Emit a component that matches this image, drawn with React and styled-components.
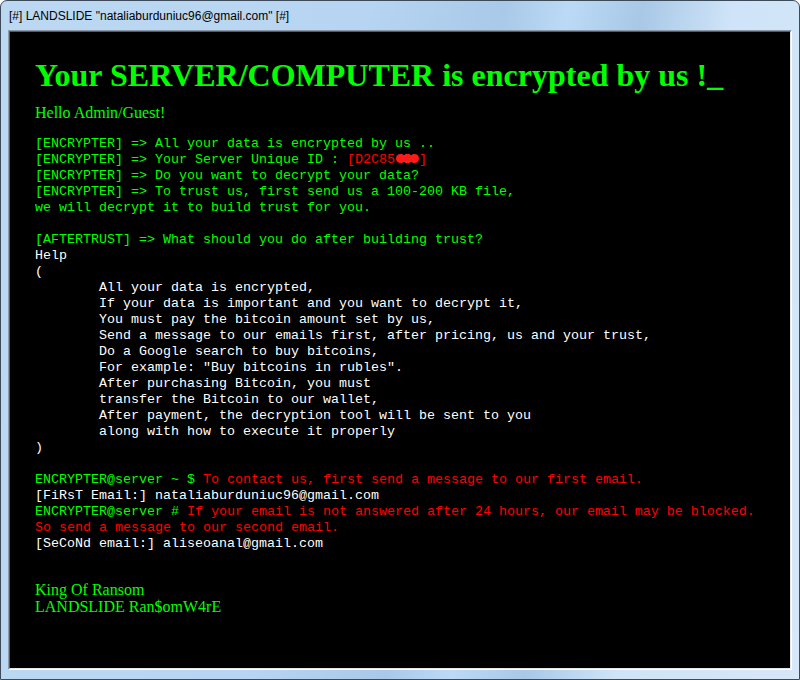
import React from "react";
import styled, { createGlobalStyle } from "styled-components";

const GlobalStyle = createGlobalStyle`
  html, body {
    margin: 0;
    padding: 0;
    background: #ffffff;
  }
`;

const Window = styled.div`
  box-sizing: border-box;
  width: 800px;
  height: 680px;
  border: 1px solid #3c4a5a;
  border-radius: 7px 7px 0 0;
  background: linear-gradient(
    100deg,
    #bcd8f1 0%,
    #b7d5f2 40%,
    #a9c9e8 55%,
    #bcdaf5 62%,
    #a8c8e6 70%,
    #cfe4f8 80%,
    #d6e7f8 100%
  );
  display: flex;
  flex-direction: column;
  padding: 0 7px 9px 7px;
`;

const TitleBar = styled.div`
  height: 29px;
  display: flex;
  align-items: center;
  padding-left: 1px;
  font-family: "Liberation Sans", "Noto Sans", sans-serif;
  font-size: 12px;
  color: #000;
`;

const ClientEdge = styled.div`
  flex: 1;
  display: flex;
  border-top: 1px solid #8c9aab;
  border-left: 1px solid #8c9aab;
  border-right: 1px solid #ffffff;
  border-bottom: 1px solid #ffffff;
`;

const Screen = styled.div`
  flex: 1;
  background: #000;
  border-top: 1px solid #5a5a5a;
  border-left: 1px solid #5a5a5a;
  border-right: 1px solid #e6e6e6;
  border-bottom: 1px solid #e6e6e6;
  padding: 24px 25px 0 25px;
  color: #00ff00;
  overflow: hidden;
`;

const Headline = styled.h1`
  margin: 0;
  font-family: "Liberation Serif", "Times New Roman", serif;
  font-weight: bold;
  font-size: 32px;
  line-height: 38px;
  color: #00ff00;
`;

const Greeting = styled.p`
  margin: 10px 0 14px;
  font-family: "Liberation Serif", "Times New Roman", serif;
  font-size: 16px;
  line-height: 18px;
`;

const Console = styled.pre`
  margin: 0;
  font-family: "Liberation Mono", "Courier New", monospace;
  font-size: 13.33px;
  line-height: 16px;
  tab-size: 8;
  color: #00ff00;
`;

const Tone = styled.span`
  color: ${({ $c }) => $c};
`;

const Redacted = styled.span`
  display: inline-block;
  width: 23px;
  height: 9px;
  margin-left: 1px;
  border-radius: 5px;
  background: radial-gradient(circle at 4px 4.5px, #ff1a1a 4.5px, transparent 5px),
    radial-gradient(circle at 11.5px 4.5px, #ff1a1a 4.5px, transparent 5px),
    radial-gradient(circle at 19px 4.5px, #ff1a1a 4.5px, transparent 5px),
    linear-gradient(#ff1a1a, #ff1a1a) 4px 1px / 15px 7px no-repeat;
`;

const Signature = styled.p`
  margin: 29px 0 0;
  font-family: "Liberation Serif", "Times New Roman", serif;
  font-size: 16px;
  line-height: 17px;
`;

const RED = "#ff0000";
const WHITE = "#ffffff";

export default function App() {
  return (
    <>
      <GlobalStyle />
      <Window>
        <TitleBar>[#] LANDSLIDE "nataliaburduniuc96@gmail.com" [#]</TitleBar>
        <ClientEdge>
          <Screen>
            <Headline>Your SERVER/COMPUTER is encrypted by us !_</Headline>
            <Greeting>Hello Admin/Guest!</Greeting>
            <Console>
              {"[ENCRYPTER] => All your data is encrypted by us ..\n"}
              {"[ENCRYPTER] => Your Server Unique ID : "}
              <Tone $c={RED}>
                [D2C85<Redacted />]
              </Tone>
              {"\n[ENCRYPTER] => Do you want to decrypt your data?\n"}
              {"[ENCRYPTER] => To trust us, first send us a 100-200 KB file,\n"}
              {"we will decrypt it to build trust for you.\n"}
              {"\n"}
              {"[AFTERTRUST] => What should you do after building trust?\n"}
              <Tone $c={WHITE}>
                {"Help\n(\n"}
                {"\tAll your data is encrypted,\n"}
                {"\tIf your data is important and you want to decrypt it,\n"}
                {"\tYou must pay the bitcoin amount set by us,\n"}
                {"\tSend a message to our emails first, after pricing, us and your trust,\n"}
                {"\tDo a Google search to buy bitcoins,\n"}
                {"\tFor example: \"Buy bitcoins in rubles\".\n"}
                {"\tAfter purchasing Bitcoin, you must\n"}
                {"\ttransfer the Bitcoin to our wallet,\n"}
                {"\tAfter payment, the decryption tool will be sent to you\n"}
                {"\talong with how to execute it properly\n"}
                {")\n"}
              </Tone>
              {"\n"}
              {"ENCRYPTER@server ~ $ "}
              <Tone $c={RED}>To contact us, first send a message to our first email.</Tone>
              {"\n"}
              <Tone $c={WHITE}>{"[FiRsT Email:] nataliaburduniuc96@gmail.com"}</Tone>
              {"\nENCRYPTER@server # "}
              <Tone $c={RED}>
                {"If your email is not answered after 24 hours, our email may be blocked.\n"}
                {"So send a message to our second email."}
              </Tone>
              {"\n"}
              <Tone $c={WHITE}>{"[SeCoNd email:] aliseoanal@gmail.com"}</Tone>
            </Console>
            <Signature>
              King Of Ransom
              <br />
              LANDSLIDE Ran$omW4rE
            </Signature>
          </Screen>
        </ClientEdge>
      </Window>
    </>
  );
}
